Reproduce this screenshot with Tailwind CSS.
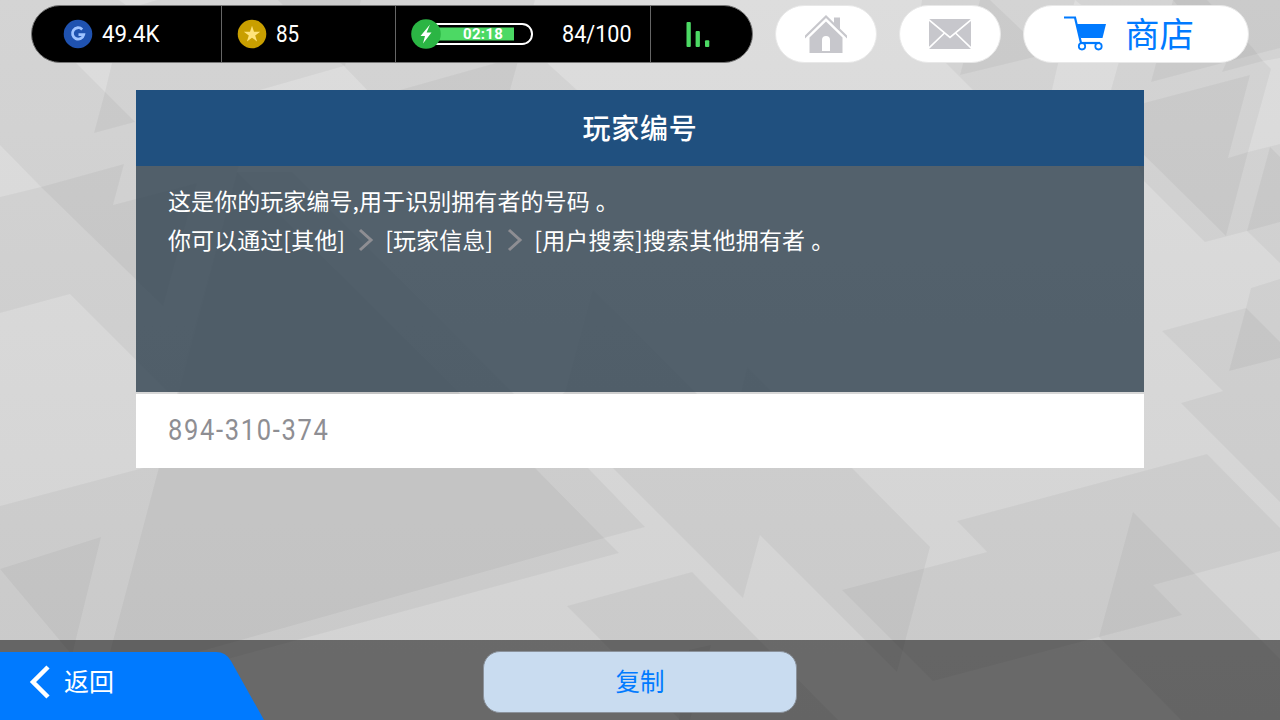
<!DOCTYPE html>
<html lang="zh-CN">
<head>
    <meta charset="UTF-8">
    <meta name="viewport" content="width=device-width, initial-scale=1.0">
    <title>玩家编号</title>
    <script src="https://cdn.jsdelivr.net/npm/@tailwindcss/browser@4"></script>
</head>
<body class="relative h-[720px] w-[1280px] overflow-hidden bg-linear-to-b from-[#dddddd] to-[#d2d2d2] font-['Roboto','Noto_Sans_CJK_SC',sans-serif]">
    <!-- Background shards -->
    <svg class="absolute inset-0" width="1280" height="720" viewBox="0 0 1280 720" fill="#000" fill-opacity=".04">
        <path fill-rule="evenodd" d="M0 0H119L130 8 157 0H535L510 90H367L344 66 260 90 237 172 178 392H168L70 294 0 313V197L41 187 0 145ZM76 63H112L105 92Z" />
        <path d="M105 92L135 122 94 133Z" />
        <path d="M41 187L124 164 113 205 197 183 163 306Z" />
        <path d="M278 0H361L345 66 340 63Z" />
        <path d="M400 90L535 52 577 90Z" />
        <path d="M0 506L158 464 237 172 292 172 588 468 645 527 604 538 619 553 224 660 100 720H0Z" />
        <path d="M0 569L101 537 72 655Z" />
        <path d="M237 172L535 468 604 538 180 657 108 660Z" />
        <path d="M593 290L771 468H852L930 547 897 672 760 535 743 598 549 404 565 392Z" />
        <path d="M747 367L772 392H741Z" />
        <path d="M567 606L692 572 838 720H680Z" />
        <path d="M689 650L711 645 690 720H679Z" />
        <path d="M957 521L1207 454 1280 528V551L1153 585 1182 615 933 681 842 590 987 552Z" />
        <path d="M1133 512L1280 659V720H1181L1099 637Z" />
        <path d="M1162 331L1246 308 1251 288 1280 279V502L1181 403 1223 391Z" />
        <path d="M1246 308L1280 342V358L1229 371Z" />
        <path d="M922 0H1075L1057 68 1052 90H973L917 34Z" />
        <path d="M980 0H990L1047 54 960 75Z" />
        <path fill-rule="evenodd" d="M1075 0H1280V263L1247 231 1205 242 1144 181 1111 90 1125 40ZM1280 58L1263 61 1271 69 1248 152 1280 144Z" />
        <path d="M1173 0H1280V48L1151 82Z" />
        <path d="M1173 0H1207L1252 47 1263 61 1222 72 1226 63Z" />
        <path d="M1144 103L1250 75 1228 158 1248 152 1226 236 1144 155Z" />
        <path d="M1270 147L1280 157V222L1247 231Z" />
    </svg>

    <div class="relative flex h-full flex-col">
        <!-- Top bar -->
        <header class="flex h-[90px] shrink-0 items-start gap-[22px] pt-[5px] pl-[31px]">
            <div class="flex h-[58px] w-[722px] overflow-hidden rounded-full border border-[#777] bg-black text-2xl text-white">
                <div class="flex w-[190px] items-center border-r border-[#666] pl-[31px]">
                    <svg class="mr-[9px] h-[30px] w-[30px]" viewBox="0 0 30 30">
                        <circle cx="15" cy="15" r="14.3" fill="#1f52b0" />
                        <path d="M19.200 10.400A5.700 5.700 0 1 0 20.700 15.700H15.500" fill="none" stroke="#9fc3ff" stroke-width="2.800" />
                    </svg>
                    <span class="inline-block origin-left scale-x-93">49.4K</span>
                </div>
                <div class="flex w-[174px] items-center border-r border-[#666] pl-[15px]">
                    <svg class="mr-[9px] h-[30px] w-[30px]" viewBox="0 0 30 30">
                        <circle cx="15" cy="15" r="14.3" fill="#c99f00" />
                        <path d="M15 6.8L17 12.8H23.2L18.2 16.5 20.1 22.4 15 18.8 9.9 22.4 11.8 16.5 6.8 12.8H13Z" fill="#ffe37a" />
                    </svg>
                    <span class="inline-block origin-left scale-x-86">85</span>
                </div>
                <div class="flex w-[255px] items-center border-r border-[#666] pl-[15px]">
                    <div class="relative h-[30px] w-[124px]">
                        <svg class="absolute inset-0" width="124" height="30" viewBox="0 0 124 30">
                            <rect x="10" y="5" width="111" height="20" rx="9.8" fill="#000" stroke="#fff" stroke-width="2" />
                            <path d="M20 8.5H103V21.500H20Z" fill="#4cd964" />
                            <circle cx="15" cy="15" r="14.8" fill="#2bb544" />
                            <path d="M19 5.500L9.500 17H14L12 24.500 20.500 13.500H15.600Z" fill="#fff" />
                        </svg>
                        <span class="absolute top-[5px] left-[52px] text-[15px] leading-5 font-bold tracking-[.3px]">02:18</span>
                    </div>
                    <span class="ml-[27px] inline-block origin-left scale-x-90">84/100</span>
                </div>
                <svg class="mt-[15px] ml-[35px] h-[28px] w-[26px]" viewBox="0 0 26 28" fill="#4cd964">
                    <rect x="0.500" y="1" width="4.300" height="25" rx="1" />
                    <rect x="9.600" y="10" width="4.300" height="16" rx="1" />
                    <rect x="19" y="19.300" width="4.300" height="6.700" rx="1" />
                </svg>
            </div>
            <button class="flex h-[58px] w-[102px] justify-center rounded-full border border-[#e8e8e8] bg-white pt-[8px]">
                <svg class="h-[40px] w-[44px]" viewBox="0 0 44 40" fill="#c7c7cc">
                    <path d="M30 3.500H36V17L30 11Z" />
                    <path d="M22 1L43 21.500V24.500L22 4 1 24.500V21.500Z" />
                    <path fill-rule="evenodd" d="M22 7.500L38.500 23.500V39H5.500V23.500ZM18 37H26V26A4 4 0 0 0 18 26Z" />
                </svg>
            </button>
            <button class="flex h-[58px] w-[102px] items-center justify-center rounded-full border border-[#e8e8e8] bg-white">
                <svg class="h-[30px] w-[42px]" viewBox="0 0 42 30">
                    <rect width="42" height="30" rx="1.500" fill="#c7c7cc" />
                    <path d="M0 1L21 18.500 42 1M0 29L15.500 14M42 29L26.500 14" fill="none" stroke="#fff" stroke-width="1.700" />
                </svg>
            </button>
            <button class="flex h-[58px] w-[226px] items-center rounded-full border border-[#e8e8e8] bg-white pl-[40px] text-[34.5px] text-[#007aff]">
                <svg class="mr-[17px] h-[36px] w-[44px]" viewBox="0 0 44 36" fill="#007aff">
                    <path d="M0 1.500H11L17 27" fill="none" stroke="#007aff" stroke-width="2.200" />
                    <path d="M12.500 8H42L38.500 22H16.500Z" />
                    <path d="M16 27H36" stroke="#007aff" stroke-width="2.200" />
                    <g fill="#fff" stroke="#007aff" stroke-width="1.800">
                        <circle cx="18" cy="30.300" r="3.200" />
                        <circle cx="34.500" cy="30.300" r="3.200" />
                    </g>
                </svg>
                <span class="mt-[3px] leading-none">商店</span>
            </button>
        </header>

        <!-- Player ID panel -->
        <main class="mx-[136px] flex flex-1 flex-col">
            <h1 class="flex h-[76px] items-center justify-center bg-[#20507f] pt-[3px] text-[28px] font-medium tracking-[.7px] text-white">玩家编号</h1>
            <div class="h-[226px] bg-[rgb(49_66_80/.8)] px-[32px] pt-[15px] text-[23px] leading-[38.5px] tracking-[.07px] text-white">
                <p class="font-['Noto_Sans_CJK_SC',sans-serif] whitespace-nowrap">这是你的玩家编号,用于识别拥有者的号码<span class="ml-[6px]">。</span></p>
                <p class="flex items-center font-['Noto_Sans_CJK_SC',sans-serif] whitespace-nowrap">
                    你可以通过[其他]
                    <svg class="mt-[3px] mr-[11px] ml-[13px] h-[24px] w-[16px]" viewBox="0 0 16 24"><path d="M2 2L13 12 2 22" fill="none" stroke="#8e8e93" stroke-width="3" /></svg>
                    [玩家信息]
                    <svg class="mt-[3px] mr-[11px] ml-[14px] h-[24px] w-[16px]" viewBox="0 0 16 24"><path d="M2 2L13 12 2 22" fill="none" stroke="#8e8e93" stroke-width="3" /></svg>
                    <span class="tracking-[.2px]">[用户搜索]搜索其他拥有者<span class="ml-[6px]">。</span></span>
                </p>
            </div>
            <div class="mt-[2px] flex h-[74px] items-center bg-white pl-[32px] text-[29px] text-[#8e8e93]">
                <span class="inline-block origin-left scale-x-88 tracking-[1.9px]">894-310-374</span>
            </div>
        </main>

        <!-- Bottom bar -->
        <footer class="relative flex h-[80px] shrink-0 items-start justify-center bg-black/50 pt-[11px]">
            <button class="absolute bottom-0 left-0 flex h-[68px] w-[264px] items-center pb-[8px] text-[25px] text-white">
                <svg class="absolute inset-0" width="264" height="68" viewBox="0 0 264 68"><path d="M0 0H216Q226 0 231 9L264 68H0Z" fill="#007aff" /></svg>
                <svg class="relative ml-[29px] h-[34px] w-[22px]" viewBox="0 0 22 34"><path d="M19 2L4 17 19 32" fill="none" stroke="#fff" stroke-width="4.500" /></svg>
                <span class="relative mt-px ml-[13px] leading-none">返回</span>
            </button>
            <button class="flex h-[62px] w-[314px] items-center justify-center rounded-[17px] border border-[#8b929b] bg-[#c9dcf0] pt-[2px] text-[24.5px] text-[#007aff]">复制</button>
        </footer>
    </div>
</body>
</html>
